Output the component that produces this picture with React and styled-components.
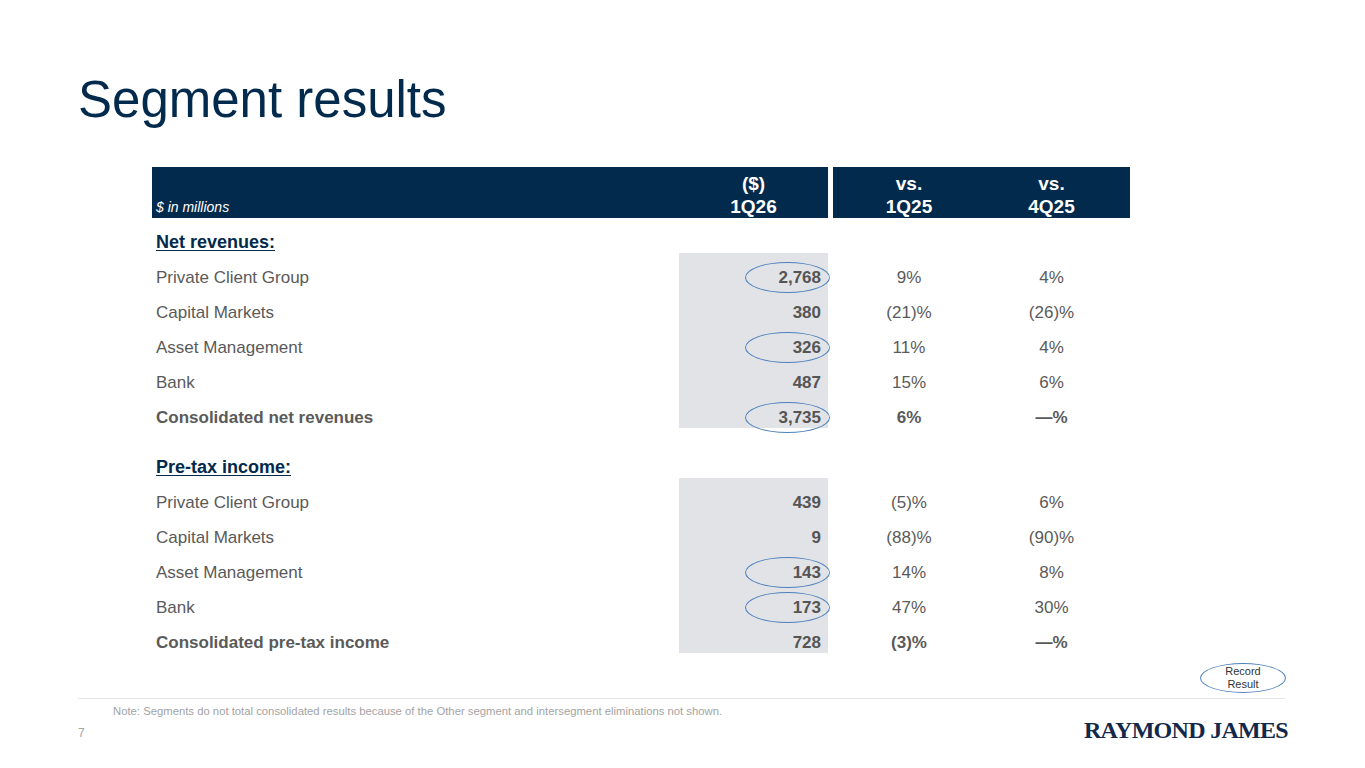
import React from 'react';
import styled, { createGlobalStyle } from 'styled-components';

const GlobalStyle = createGlobalStyle`
  html, body {
    margin: 0;
    padding: 0;
    background: #ffffff;
  }
  body {
    font-family: "Liberation Sans", Arial, sans-serif;
  }
`;

const NAVY = '#022a4c';

const Page = styled.div`
  width: 1365px;
  height: 768px;
  box-sizing: border-box;
  padding: 71px 80px 0 78px;
  display: flex;
  flex-direction: column;
  background: #fff;
  overflow: hidden;
`;

const Title = styled.h1`
  margin: 0;
  font-size: 51px;
  line-height: 1.15;
  font-weight: 400;
  color: ${NAVY};
`;

const Table = styled.div`
  margin: 37px 0 0 74px;
  width: 978px;
  display: flex;
  flex-direction: column;
`;

const Row = styled.div`
  display: grid;
  grid-template-columns: 527px 149px 5px 152px 145px;
  height: ${(p) => p.h || 35}px;
`;

const HeadCell = styled.div`
  background: ${NAVY};
  color: #fff;
  display: flex;
  flex-direction: column;
  justify-content: flex-end;
  align-items: ${(p) => (p.left ? 'flex-start' : 'center')};
  padding: ${(p) => (p.left ? '0 0 3px 4px' : p.pr ? `0 ${p.pr}px 0 0` : '0')};
  font-size: ${(p) => (p.left ? '14px' : '19px')};
  font-style: ${(p) => (p.left ? 'italic' : 'normal')};
  font-weight: ${(p) => (p.left ? 400 : 700)};
  line-height: ${(p) => (p.left ? '16px' : '23px')};
`;

const Gap = styled.div``;

const Label = styled.div`
  display: flex;
  align-items: flex-end;
  padding-left: 4px;
  font-size: 17px;
  line-height: 20px;
  color: #5a5a5a;
  font-weight: ${(p) => (p.bold ? 700 : 400)};
`;

const Section = styled.div`
  display: flex;
  align-items: flex-end;
  padding: 0 0 0 4px;
  font-size: 18px;
  line-height: 22px;
  font-weight: 700;
  color: ${NAVY};
  text-decoration: underline;
  text-underline-offset: 2px;
`;

const Value = styled.div`
  position: relative;
  background: ${(p) => (p.shade ? '#e1e3e6' : 'transparent')};
  display: flex;
  align-items: flex-end;
  justify-content: flex-end;
  padding-right: 7px;
  font-size: 17px;
  line-height: 20px;
  font-weight: 700;
  color: #555;
`;

const Change = styled.div`
  display: flex;
  align-items: flex-end;
  justify-content: center;
  padding-right: ${(p) => p.pr || 0}px;
  font-size: 17px;
  line-height: 20px;
  color: #5a5a5a;
  font-weight: ${(p) => (p.bold ? 700 : 400)};
`;

const Ring = styled.span`
  position: absolute;
  z-index: 2;
  right: -2px;
  bottom: -5px;
  width: 85px;
  height: 31px;
  box-sizing: border-box;
  border: 1.5px solid #4f81bd;
  border-radius: 50%;
  pointer-events: none;
`;

const Spacer = styled.div`
  height: ${(p) => p.h}px;
`;

const StampRow = styled.div`
  display: flex;
  justify-content: flex-end;
  margin-top: 10px;
`;

const Stamp = styled.div`
  width: 86px;
  height: 30px;
  box-sizing: border-box;
  border: 1.5px solid #4f81bd;
  border-radius: 50%;
  display: flex;
  align-items: center;
  justify-content: center;
  text-align: center;
  font-size: 11px;
  line-height: 13px;
  color: #333;
  margin-right: -1px;
`;

const Divider = styled.div`
  margin-top: 5px;
  height: 1px;
  background: #e3e7eb;
`;

const Note = styled.div`
  margin-top: 6px;
  padding-left: 35px;
  font-size: 11.3px;
  line-height: 13px;
  color: #a3a3a3;
`;

const Bottom = styled.div`
  margin-top: -2px;
  display: flex;
  justify-content: space-between;
  align-items: center;
`;

const PageNo = styled.div`
  font-size: 12px;
  color: #a3a3a3;
  margin-top: 6px;
`;

const Logo = styled.div`
  font-family: "Liberation Serif", "Times New Roman", serif;
  font-weight: 700;
  font-size: 24px;
  letter-spacing: -0.7px;
  color: #13294b;
  line-height: 28px;
  margin-right: -3px;
`;

const revenues = [
  ['Private Client Group', '2,768', '9%', '4%', true],
  ['Capital Markets', '380', '(21)%', '(26)%'],
  ['Asset Management', '326', '11%', '4%', true],
  ['Bank', '487', '15%', '6%'],
];

const pretax = [
  ['Private Client Group', '439', '(5)%', '6%'],
  ['Capital Markets', '9', '(88)%', '(90)%'],
  ['Asset Management', '143', '14%', '8%', true],
  ['Bank', '173', '47%', '30%', true],
];

const DataRow = ({ label, value, a, b, ring, bold }) => (
  <Row>
    <Label bold={bold}>{label}</Label>
    <Value shade>
      {value}
      {ring && <Ring />}
    </Value>
    <Gap />
    <Change bold={bold}>{a}</Change>
    <Change bold={bold} pr={12}>{b}</Change>
  </Row>
);

const SectionRow = ({ children }) => (
  <Row>
    <Section>{children}</Section>
    <Value />
    <Gap />
    <Change />
    <Change />
  </Row>
);

export default function App() {
  return (
    <>
      <GlobalStyle />
      <Page>
        <Title>Segment results</Title>
        <Table>
          <Row h={51}>
            <HeadCell left>$ in millions</HeadCell>
            <HeadCell>
              <span>($)</span>
              <span>1Q26</span>
            </HeadCell>
            <Gap />
            <HeadCell>
              <span>vs.</span>
              <span>1Q25</span>
            </HeadCell>
            <HeadCell pr={12}>
              <span>vs.</span>
              <span>4Q25</span>
            </HeadCell>
          </Row>
          <SectionRow>Net revenues:</SectionRow>
          {revenues.map(([l, v, a, b, r]) => (
            <DataRow key={l} label={l} value={v} a={a} b={b} ring={r} />
          ))}
          <DataRow label="Consolidated net revenues" value="3,735" a="6%" b="—%" ring bold />
          <Spacer h={15} />
          <SectionRow>Pre-tax income:</SectionRow>
          {pretax.map(([l, v, a, b, r]) => (
            <DataRow key={l} label={l} value={v} a={a} b={b} ring={r} />
          ))}
          <DataRow label="Consolidated pre-tax income" value="728" a="(3)%" b="—%" bold />
        </Table>
        <StampRow>
          <Stamp>
            Record
            <br />
            Result
          </Stamp>
        </StampRow>
        <Divider />
        <Note>
          Note: Segments do not total consolidated results because of the Other segment and intersegment eliminations not shown.
        </Note>
        <Bottom>
          <PageNo>7</PageNo>
          <Logo>RAYMOND JAMES</Logo>
        </Bottom>
      </Page>
    </>
  );
}
